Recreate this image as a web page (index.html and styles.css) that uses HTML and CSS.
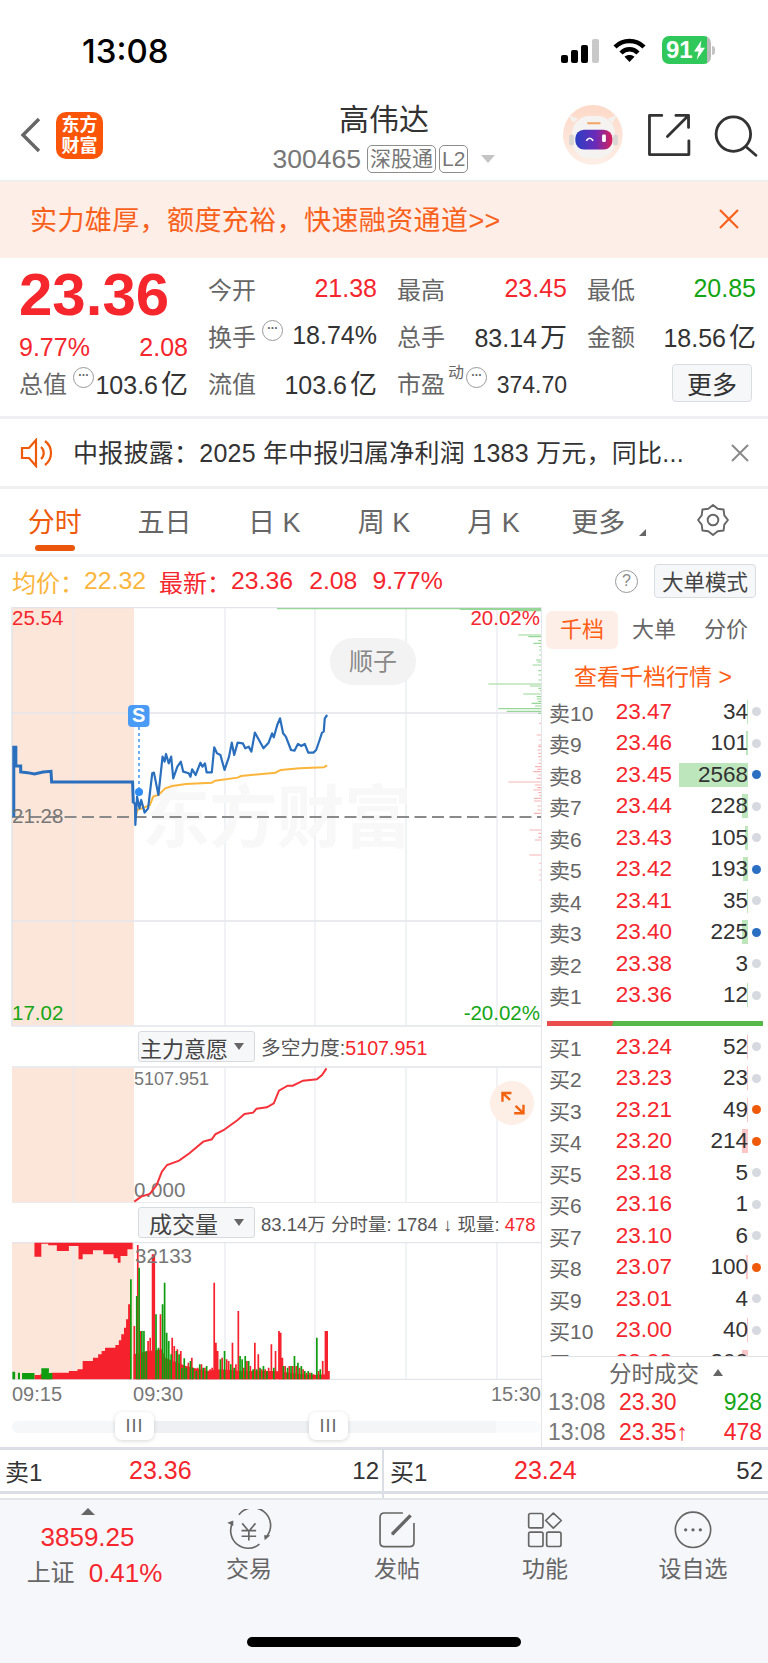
FILE: index.html
```html
<!DOCTYPE html>
<html lang="zh-CN">
<head>
  <meta charset="UTF-8">
  <meta name="viewport" content="width=device-width, initial-scale=1.0">
  <title>高伟达 300465</title>
  <link rel="stylesheet" href="styles.css">
</head>
<body>
  <!-- status bar -->
  <div class="statusbar">
    <span class="clock">13:08</span>
    <div class="status-icons">
      <svg class="signal" width="38" height="24" viewBox="0 0 38 24">
        <rect x="0" y="16" width="7" height="8" rx="2" fill="#000"/>
        <rect x="10" y="11" width="7" height="13" rx="2" fill="#000"/>
        <rect x="20" y="6" width="7" height="18" rx="2" fill="#000"/>
        <rect x="31" y="0" width="7" height="24" rx="2" fill="#c9c9c9"/>
      </svg>
      <svg class="wifi" width="33" height="25" viewBox="0 0 33 25" fill="none" stroke="#000" stroke-width="4.4">
        <path d="M2 9 C10 1 23 1 31 9"/>
        <path d="M8 15 C13 10 20 10 25 15"/>
        <path d="M16.5 24 L11.5 18.8 C14 16.4 19 16.4 21.5 18.8 Z" fill="#000" stroke="none"/>
      </svg>
      <div class="battery">
        <span>91</span>
        <svg width="11" height="22" viewBox="0 0 12 21"><path d="M8 0 L0 12 H5 L3 21 L12 8 H7 Z" fill="#fff"/></svg>
      </div>
      <span class="battery-tip"></span>
    </div>
  </div>

  <!-- nav -->
  <header class="nav">
    <div class="nav-left">
      <svg width="22" height="36" viewBox="0 0 22 36" fill="none" stroke="#666" stroke-width="3.4">
        <path d="M19 2 L3 18 L19 34"/>
      </svg>
      <div class="logo">东方<br>财富</div>
    </div>
    <div class="nav-title">
      <h1>高伟达</h1>
      <div class="nav-sub">
        <span class="code">300465</span>
        <span class="tag">深股通</span>
        <span class="tag">L2</span>
        <span class="caret-down"></span>
      </div>
    </div>
    <div class="nav-right">
      <svg class="robot" width="60" height="60" viewBox="40 20 175 175">
        <defs>
          <linearGradient id="visor" x1="0" x2="1" y1="0" y2="0">
            <stop offset="0" stop-color="#2a3fc4"/>
            <stop offset="0.55" stop-color="#6a2bb8"/>
            <stop offset="1" stop-color="#d8205a"/>
          </linearGradient>
          <linearGradient id="halo" x1="0" x2="0" y1="0" y2="1">
            <stop offset="0" stop-color="#fdd9c8"/>
            <stop offset="1" stop-color="#fdeee6"/>
          </linearGradient>
        </defs>
        <circle cx="127" cy="107" r="87" fill="url(#halo)"/>
        <path d="M70 72 L56 50 L84 60 Z M184 72 L198 50 L170 60 Z" fill="#f4f2f0"/>
        <rect x="66" y="52" width="126" height="124" rx="52" fill="#f5f3f1"/>
        <rect x="58" y="106" width="14" height="32" rx="6" fill="#d9d6d3"/>
        <rect x="186" y="106" width="14" height="32" rx="6" fill="#d9d6d3"/>
        <rect x="110" y="70" width="40" height="6" rx="3" fill="#f4a565"/>
        <rect x="76" y="92" width="108" height="58" rx="25" fill="url(#visor)"/>
        <path d="M108 124 Q118 110 128 124" fill="none" stroke="#fff" stroke-width="5"/>
        <rect x="154" y="106" width="11" height="22" rx="4" fill="#fff"/>
      </svg>
      <svg class="share" width="44" height="44" viewBox="290 45 125 125" fill="none" stroke="#333" stroke-width="8" stroke-linecap="round" stroke-linejoin="round">
        <path d="M332 52 H297 V163 H409 V124"/>
        <path d="M348 112 L407 53 M372 52 H408 V86"/>
      </svg>
      <svg class="search" width="44" height="44" viewBox="495 45 125 125" fill="none" stroke="#333" stroke-width="8" stroke-linecap="round">
        <circle cx="550" cy="105" r="49"/>
        <path d="M586 141 L614 165"/>
      </svg>
    </div>
  </header>

  <!-- promo -->
  <div class="banner">
    <span>实力雄厚，额度充裕，快速融资通道&gt;&gt;</span>
    <svg width="22" height="22" viewBox="0 0 22 22" stroke="#f8611c" stroke-width="2.2"><path d="M2 2 L20 20 M20 2 L2 20"/></svg>
  </div>

  <!-- quote -->
  <section class="quote">
    <div class="price-box">
      <div class="price">23.36</div>
      <div class="price-sub"><span>9.77%</span><span>2.08</span></div>
    </div>
    <div class="cell"><span class="lbl">今开</span><span class="up">21.38</span></div>
    <div class="cell"><span class="lbl">最高</span><span class="up">23.45</span></div>
    <div class="cell"><span class="lbl">最低</span><span class="down">20.85</span></div>
    <div class="cell"><span class="lbl">换手<i class="hint">···</i></span><span class="val">18.74%</span></div>
    <div class="cell"><span class="lbl">总手</span><span class="val">83.14<span class="unit">万</span></span></div>
    <div class="cell"><span class="lbl">金额</span><span class="val">18.56<span class="unit">亿</span></span></div>
    <div class="cell"><span class="lbl">总值<i class="hint">···</i></span><span class="val">103.6<span class="unit">亿</span></span></div>
    <div class="cell"><span class="lbl">流值</span><span class="val">103.6<span class="unit">亿</span></span></div>
    <div class="cell"><span class="lbl">市盈<sup class="dyn">动</sup><i class="hint hint-tight">···</i></span><span class="val val-small">374.70</span></div>
    <div class="cell cell-end"><button class="more-btn">更多</button></div>
  </section>

  <!-- notice -->
  <div class="notice">
    <svg width="34" height="30" viewBox="0 0 34 30" fill="none" stroke="#ee5a0a" stroke-width="2.2">
      <path d="M2 10 H9 L16 2 V28 L9 20 H2 Z"/>
      <path d="M21 9 A8 8 0 0 1 21 21"/>
      <path d="M25 3 A15 15 0 0 1 25 27"/>
    </svg>
    <span class="notice-text">中报披露：2025 年中报归属净利润 1383 万元，同比...</span>
    <svg class="notice-x" width="18" height="18" viewBox="0 0 18 18" stroke="#8a8a8a" stroke-width="2"><path d="M1 1 L17 17 M17 1 L1 17"/></svg>
  </div>

  <!-- period tabs -->
  <nav class="tabs">
    <a class="tab active">分时<span class="tab-bar"></span></a>
    <a class="tab">五日</a>
    <a class="tab">日 K</a>
    <a class="tab">周 K</a>
    <a class="tab">月 K</a>
    <a class="tab tab-more">更多<span class="corner"></span></a>
    <a class="tab">
      <svg width="32" height="32" viewBox="0 0 30 30" fill="none" stroke="#666" stroke-width="1.8" stroke-linejoin="round">
        <polygon points="15,1 19.4,4.4 24.9,5.1 25.6,10.6 29,15 25.6,19.4 24.9,24.9 19.4,25.6 15,29 10.6,25.6 5.1,24.9 4.4,19.4 1,15 4.4,10.6 5.1,5.1 10.6,4.4"/>
        <circle cx="15" cy="15" r="5"/>
      </svg>
    </a>
  </nav>

  <div class="avg-row">
    <span class="avg">均价：</span><span class="avg avg-val">22.32</span>
    <span class="up avg-new">最新：</span><span class="up avg-p">23.36</span><span class="up avg-c">2.08</span><span class="up avg-r">9.77%</span>
    <span class="help">?</span>
    <button class="mode-btn">大单模式</button>
  </div>

  <div class="board">
    <!-- charts -->
    <div class="charts">
      <svg class="chart" width="541" height="420" viewBox="0 607 541 420">
        <rect x="12" y="608" width="122" height="417" fill="#fce5d9"/>
        <path class="grid" d="M73.500 608V1025M225 608V1025M315 608V1025M406 608V1025M497 608V1025"/>
        <path class="frame" d="M12 607.500H541M12 713H541M12 921H541M12 1026H541M12 607V1026"/>
        <text class="wm" x="142" y="842" textLength="270">东方财富</text>
        <g class="depth" transform="translate(460 600) scale(.3333)">
          <path class="depth-g" d="M-549 26H245M0 28H245M150 32H245M175 105H245M205 110H245M235 122H245M220 130H245M238 140H245M238 150H245M238 165H245M228 180H245M232 186H245M218 195H245M235 212H245M235 225H245M235 240H245M85 252H245M210 258H245M235 265H245M240 272H245M190 282H245M230 290H245M230 297H245M235 304H245M215 310H245M225 318H245M115 326H245M140 334H245M235 340H245"/>
          <path class="depth-r" d="M238 370H245M230 405H245M238 420H245M235 435H245M235 440H245M232 450H245M235 460H245M235 470H245M238 480H245M235 490H245M225 500H245M232 508H245M220 515H245M235 525H245M230 535H245M145 546H245M225 555H245M232 563H245M220 570H245M235 578H245M238 587H245M222 595H245M222 603H245M232 618H245M232 630H245M222 640H245M208 690H245M235 700H245M235 712H245M225 720H245M208 765H245M238 790H245M238 810H245M238 825H245M238 840H245"/>
        </g>
        <line class="dash" x1="12" y1="817" x2="541" y2="817"/>
        <rect x="330" y="638" width="86" height="47" rx="23" fill="#f3f3f3"/>
        <text class="shunzi" x="373" y="670">顺子</text>
        <g transform="translate(0 600) scale(.3444 .3333)">
          <polyline class="line-avg" points="395,650 398,630 420,622 435,615 445,590 460,585 480,565 500,558 540,552 615,548 625,542 690,533 700,528 800,518 815,510 870,505 940,502 950,496"/>
          <polyline class="line-pre" points="40,650 40,442 46,442 46,498 60,498 60,516 80,518 100,522 125,516 148,514 150,546 385,546 387,610"/>
          <polyline class="line-price" points="387,610 392,610 393,675 398,590 405,625 410,600 420,638 430,625 442,520 447,518 460,585 472,470 478,485 482,462 490,490 497,470 503,535 515,500 525,485 532,515 548,520 553,530 558,508 568,525 582,488 588,500 595,490 600,517 615,517 622,442 630,460 640,465 652,510 665,470 673,428 680,465 690,428 705,430 712,445 722,440 730,455 740,398 752,420 765,445 780,428 790,400 795,412 805,375 813,355 822,400 830,410 845,450 855,452 865,432 875,438 885,432 895,458 910,458 918,450 928,420 935,398 940,395 943,355 950,345"/>
        </g>
        <line class="s-dash" x1="139" y1="727" x2="139" y2="790"/>
        <circle cx="139" cy="792" r="4" fill="#2f8df5"/>
        <rect x="128" y="705" width="21.500" height="22" rx="4" fill="#4a9bf5"/>
        <text class="s-mark" x="138.700" y="722">S</text>
        <text class="lb red" x="12" y="625">25.54</text>
        <text class="lb gray" x="12" y="823">21.28</text>
        <text class="lb green" x="12" y="1020">17.02</text>
        <text class="lb red end" x="540" y="625">20.02%</text>
        <text class="lb green end" x="540" y="1020">-20.02%</text>
      </svg>

      <div class="ind-row">
        <button class="ind-select">主力意愿<span class="caret-sm"></span></button>
        <span class="ind-info">多空力度:<span class="up">5107.951</span></span>
      </div>

      <svg class="chart" width="541" height="137" viewBox="0 1066 541 137">
        <rect x="12" y="1068" width="122" height="134" fill="#fce5d9"/>
        <path class="grid" d="M73.500 1068V1202M225 1068V1202M315 1068V1202M406 1068V1202M497 1068V1202"/>
        <path class="frame" d="M12 1067H541M12 1203H541"/>
        <text class="lb-s gray" x="134" y="1085">5107.951</text>
        <text class="lb gray" x="134" y="1197">0.000</text>
        <g transform="translate(0 1020) scale(.3444 .3333)">
          <polyline class="line-main" points="390,545 410,530 435,522 455,495 470,455 485,435 520,422 550,400 590,365 615,358 625,343 650,330 690,300 710,282 735,278 745,266 775,262 795,250 810,212 835,197 850,197 880,182 920,178 935,165 948,145"/>
        </g>
        <circle cx="512" cy="1103" r="22" fill="#fdeee6"/>
        <g transform="translate(0 1020) scale(.3444 .3333)">
          <path class="expand" d="M1485 219 H1459 V245 M1459 219 L1481 240 M1493 280 H1520 V254 M1520 280 L1497 258"/>
        </g>
      </svg>

      <div class="ind-row">
        <button class="ind-select ind-select-center">成交量<span class="caret-sm"></span></button>
        <span class="ind-info ind-info-s">83.14万 分时量: 1784 ↓ 现量: <span class="up">478</span></span>
      </div>

      <svg class="chart" width="541" height="138" viewBox="0 1241 541 138">
        <rect x="12" y="1242" width="122" height="136" fill="#fce5d9"/>
        <path class="grid" d="M73.500 1242V1378M225 1242V1378M315 1242V1378M406 1242V1378M497 1242V1378"/>
        <path class="frame" d="M12 1241.500H541M12 1378.500H541"/>
        <g transform="translate(0 1020) scale(.3444 .3333)">
          <polygon fill="#f5222d" points="100,665 100,707 120,707 120,668 140,668 140,673 165,673 165,690 200,690 200,675 228,675 228,715 240,715 240,700 270,700 270,688 300,688 300,700 330,700 330,712 342,712 342,725 350,725 350,705 370,705 370,685 385,685 385,665"/>
          <polygon fill="#f5222d" points="100,1075 100,1062 118,1062 118,1058 150,1058 150,1055 200,1055 200,1050 225,1050 225,1045 240,1045 240,1020 270,1020 270,1010 285,1010 285,1000 295,1000 295,990 305,990 305,980 335,980 335,972 345,972 345,958 352,958 352,940 360,940 360,920 366,920 366,895 372,895 372,850 380,850 380,1075"/>
          <path fill="#0f9d0f" d="M36 1052H44V1075H36ZM52 1055H58V1075H52ZM64 1056H100V1075H64ZM120 1042H142V1075H120ZM142 1056H152V1075H142Z"/>
          <polygon fill="#f5222d" points="388,1075 388,1000 430,990 470,985 480,1010 540,1035 600,1050 640,1045 700,1050 800,1050 900,1062 955,1060 955,1075"/>
          <path class="bars-r" d="M390 1075V915M400 1075V672M408 1075V930M430 1075V960M436 1075V950M443 1075V700M448 1075V700M466 1075V880M500 1075V950M506 1075V975M515 1075V985M525 1075V990M547 1075V1025M557 1075V1010M574 1075V1040M585 1075V1030M595 1075V1040M605 1075V1050M610 1075V1045M616 1075V1040M622 1075V785M627 1075V965M632 1075V990M645 1075V1010M658 1075V1015M664 1075V1020M675 1075V965M685 1075V1030M692 1075V870M708 1075V1040M717 1075V1020M727 1075V1035M740 1075V965M750 1075V1000M760 1075V1045M770 1075V1045M780 1075V1040M788 1075V970M800 1075V990M810 1075V930M815 1075V935M820 1075V1010M828 1075V1035M840 1075V1035M850 1075V1035M860 1075V1035M870 1075V1040M880 1075V1045M890 1075V1055M900 1075V1055M910 1075V1060M925 1075V1050M937 1075V1020M945 1075V930M950 1075V930M955 1075V1050"/>
          <path class="bars-g" d="M380 1075V775M397 1075V825M404 1075V740M412 1075V930M418 1075V930M425 1075V990M453 1075V880M460 1075V980M472 1075V850M478 1075V785M484 1075V935M490 1075V960M497 1075V1000M512 1075V990M520 1075V1000M528 1075V1040M535 1075V1012M541 1075V1040M553 1075V1020M560 1075V1040M570 1075V1050M580 1075V1030M590 1075V1040M600 1075V1035M640 1075V1015M652 1075V990M670 1075V1030M680 1075V1040M697 1075V1005M703 1075V1015M712 1075V1005M722 1075V1020M735 1075V1045M745 1075V1045M755 1075V1040M765 1075V1035M775 1075V1050M795 1075V1040M823 1075V1035M835 1075V1040M845 1075V1035M855 1075V1005M865 1075V1025M875 1075V1035M885 1075V1050M895 1075V1050M905 1075V1055M920 1075V950M930 1075V1045"/>
        </g>
        <text class="lb gray" x="135" y="1262">32133</text>
      </svg>

      <div class="time-axis"><span>09:15</span><span class="time-mid">09:30</span><span class="time-end">15:30</span></div>

      <div class="slider">
        <div class="track">
          <div class="track-sel"></div>
          <div class="handle handle-a">III</div>
          <div class="handle handle-b">III</div>
        </div>
      </div>
    </div>

    <!-- order book -->
    <aside class="book">
      <div class="book-tabs">
        <span class="book-tab on">千档</span>
        <span class="book-tab">大单</span>
        <span class="book-tab">分价</span>
      </div>
      <div class="book-link">查看千档行情 &gt;</div>
      <div class="book-list">
        <div class="row"><span class="r-l">卖10</span><span class="r-p">23.47</span><span class="r-v">34<i class="vb vb-g" style="width:1px"></i></span><span class="dot"></span></div>
        <div class="row"><span class="r-l">卖9</span><span class="r-p">23.46</span><span class="r-v">101<i class="vb vb-g" style="width:2px"></i></span><span class="dot"></span></div>
        <div class="row"><span class="r-l">卖8</span><span class="r-p">23.45</span><span class="r-v">2568<i class="vb vb-g" style="width:69px"></i></span><span class="dot dot-b"></span></div>
        <div class="row"><span class="r-l">卖7</span><span class="r-p">23.44</span><span class="r-v">228<i class="vb vb-g" style="width:6px"></i></span><span class="dot"></span></div>
        <div class="row"><span class="r-l">卖6</span><span class="r-p">23.43</span><span class="r-v">105<i class="vb vb-g" style="width:3px"></i></span><span class="dot"></span></div>
        <div class="row"><span class="r-l">卖5</span><span class="r-p">23.42</span><span class="r-v">193<i class="vb vb-g" style="width:5px"></i></span><span class="dot dot-b"></span></div>
        <div class="row"><span class="r-l">卖4</span><span class="r-p">23.41</span><span class="r-v">35<i class="vb vb-g" style="width:1px"></i></span><span class="dot"></span></div>
        <div class="row"><span class="r-l">卖3</span><span class="r-p">23.40</span><span class="r-v">225<i class="vb vb-g" style="width:6px"></i></span><span class="dot dot-b"></span></div>
        <div class="row"><span class="r-l">卖2</span><span class="r-p">23.38</span><span class="r-v">3</span><span class="dot"></span></div>
        <div class="row"><span class="r-l">卖1</span><span class="r-p">23.36</span><span class="r-v">12<i class="vb vb-g" style="width:1px"></i></span><span class="dot"></span></div>
        <div class="split"></div>
        <div class="row"><span class="r-l">买1</span><span class="r-p">23.24</span><span class="r-v">52<i class="vb vb-r" style="width:1px"></i></span><span class="dot"></span></div>
        <div class="row"><span class="r-l">买2</span><span class="r-p">23.23</span><span class="r-v">23<i class="vb vb-r" style="width:1px"></i></span><span class="dot"></span></div>
        <div class="row"><span class="r-l">买3</span><span class="r-p">23.21</span><span class="r-v">49<i class="vb vb-r" style="width:1px"></i></span><span class="dot dot-o"></span></div>
        <div class="row"><span class="r-l">买4</span><span class="r-p">23.20</span><span class="r-v">214<i class="vb vb-r" style="width:6px"></i></span><span class="dot dot-o"></span></div>
        <div class="row"><span class="r-l">买5</span><span class="r-p">23.18</span><span class="r-v">5</span><span class="dot"></span></div>
        <div class="row"><span class="r-l">买6</span><span class="r-p">23.16</span><span class="r-v">1</span><span class="dot"></span></div>
        <div class="row"><span class="r-l">买7</span><span class="r-p">23.10</span><span class="r-v">6</span><span class="dot"></span></div>
        <div class="row"><span class="r-l">买8</span><span class="r-p">23.07</span><span class="r-v">100<i class="vb vb-r" style="width:2px"></i></span><span class="dot dot-o"></span></div>
        <div class="row"><span class="r-l">买9</span><span class="r-p">23.01</span><span class="r-v">4</span><span class="dot"></span></div>
        <div class="row"><span class="r-l">买10</span><span class="r-p">23.00</span><span class="r-v">40<i class="vb vb-r" style="width:1px"></i></span><span class="dot"></span></div>
        <div class="row"><span class="r-l">买11</span><span class="r-p">22.98</span><span class="r-v">300<i class="vb vb-r" style="width:6px"></i></span><span class="dot"></span></div>
      </div>
      <div class="trades">
        <div class="trades-head">分时成交<span class="caret-up"></span></div>
        <div class="trade"><span class="t-time">13:08</span><span class="up">23.30</span><span class="down">928</span></div>
        <div class="trade"><span class="t-time">13:08</span><span class="up">23.35↑</span><span class="up">478</span></div>
      </div>
    </aside>
  </div>

  <!-- best bid / ask -->
  <div class="best">
    <div class="best-cell"><span>卖1</span><span class="up">23.36</span><span class="best-v">12</span></div>
    <div class="best-cell"><span>买1</span><span class="up">23.24</span><span class="best-v">52</span></div>
  </div>
  <div class="best-gap"><span></span></div>

  <!-- bottom bar -->
  <footer class="tabbar">
    <div class="index">
      <span class="caret-up caret-index"></span>
      <div class="index-price up">3859.25</div>
      <div class="index-line"><span class="index-name">上证</span><span class="up">0.41%</span></div>
    </div>
    <div class="tb-item">
      <svg width="48" height="42" viewBox="20 25 145 126" fill="none" stroke="#666" stroke-width="5">
        <path d="M62 42 A53 53 0 0 1 147 106"/>
        <path d="M124 131 A53 53 0 0 1 43 66"/>
        <path d="M27 66 L45 59 L45 76 Z M157 104 L140 119 L138 104 Z" fill="#666" stroke="none"/>
        <path d="M72 68 L92 92 L112 68 M70 90 H114 M70 107 H114 M92 92 V120"/>
      </svg>
      <span>交易</span>
    </div>
    <div class="tb-item">
      <svg width="42" height="42" viewBox="475 28 125 125" fill="none" stroke="#666" stroke-width="5">
        <path d="M555 40 H500 Q487 40 487 53 V127 Q487 140 500 140 H575 Q588 140 588 127 V70"/>
        <path d="M523 103 L578 47" stroke-width="10"/>
        <path d="M520 106 L527 97 L531 102 Z" fill="#666" stroke="none"/>
      </svg>
      <span>发帖</span>
    </div>
    <div class="tb-item">
      <svg width="40" height="42" viewBox="920 28 120 125" fill="none" stroke="#666" stroke-width="5">
        <rect x="931" y="41" width="43" height="43" rx="5"/>
        <rect x="931" y="97" width="43" height="43" rx="5"/>
        <rect x="985" y="97" width="43" height="43" rx="5"/>
        <path d="M1005 40 L1029 62 L1005 85 L982 62 Z" stroke-linejoin="round"/>
      </svg>
      <span>功能</span>
    </div>
    <div class="tb-item">
      <svg width="40" height="42" viewBox="1362 28 120 125" fill="none" stroke="#666" stroke-width="5">
        <circle cx="1422" cy="90" r="53"/>
        <circle cx="1400" cy="90" r="5" fill="#666" stroke="none"/>
        <circle cx="1422" cy="90" r="5" fill="#666" stroke="none"/>
        <circle cx="1444" cy="90" r="5" fill="#666" stroke="none"/>
      </svg>
      <span>设自选</span>
    </div>
    <div class="home-bar"></div>
  </footer>
</body>
</html>
```

FILE: styles.css
```css
* {
  box-sizing: border-box;
}
body {
  margin: 0;
  width: 768px;
  height: 1663px;
  overflow: hidden;
  background-color: #fff;
  color: #333;
  font-family: "Liberation Sans", "Noto Sans CJK SC", sans-serif;
}
.up {
  color: #f5262c;
}
.down {
  color: #14a514;
}

/* status bar */
.statusbar {
  height: 88px;
  display: flex;
  justify-content: space-between;
  padding: 32px 53px 0 82px;
}
.clock {
  font-family: Inter, sans-serif;
  font-size: 33px;
  font-weight: 500;
  line-height: 38px;
  color: #000;
}
.status-icons {
  display: flex;
  align-items: flex-start;
  height: 32px;
  margin-top: 5px;
}
.signal {
  margin: 2px 14px 0 0;
}
.wifi {
  margin: 1px 16px 0 0;
}
.battery {
  width: 49px;
  height: 28px;
  border-radius: 7px;
  display: flex;
  align-items: center;
  padding-left: 4px;
  gap: 1px;
  background: linear-gradient(90deg, #30c85a 91%, #b9b9b9 91%);
  color: #fff;
  font-size: 24px;
  font-weight: 700;
  margin: -1px 1px 0 0;
}
.battery-tip {
  width: 3px;
  height: 9px;
  margin-top: 9px;
  border-radius: 0 3px 3px 0;
  background-color: #c4c4c4;
}

/* nav */
.nav {
  height: 92px;
  display: grid;
  grid-template-columns: 1fr auto 1fr;
  align-items: center;
  padding: 0 20px;
}
.nav-left {
  display: flex;
  align-items: center;
  gap: 14px;
  margin-top: 2px;
}
.logo {
  width: 47px;
  height: 47px;
  border-radius: 10px;
  background-color: #fb5509;
  color: #fff;
  font-size: 18px;
  font-weight: 700;
  line-height: 21px;
  text-align: center;
  padding-top: 3px;
}
.nav-title {
  text-align: center;
  margin-top: 7px;
}
.nav-title h1 {
  margin: 0;
  font-size: 30px;
  font-weight: 400;
  line-height: 40px;
  color: #333;
}
.nav-sub {
  display: flex;
  align-items: center;
  gap: 3px;
  height: 32px;
  margin-top: 3px;
}
.code {
  font-size: 26.500px;
  color: #777;
  margin-right: 3px;
}
.tag {
  border: 1px solid #8d8d8d;
  border-radius: 5px;
  height: 28px;
  line-height: 26px;
  padding: 0 2px;
  font-size: 21px;
  color: #777;
}
.caret-down {
  width: 0;
  height: 0;
  margin-left: 10px;
  border-left: 7px solid transparent;
  border-right: 7px solid transparent;
  border-top: 8px solid #c4c4c4;
}
.nav-right {
  display: flex;
  justify-content: flex-end;
  align-items: center;
  gap: 20px;
  margin-top: 2px;
  margin-right: -10px;
}
.robot {
  margin-right: 4px;
}
.search {
  margin-left: 3px;
}

/* banner */
.banner {
  height: 78px;
  display: flex;
  align-items: center;
  justify-content: space-between;
  padding: 0 28px 4px 30px;
  background-color: #fdeee7;
  color: #f8611c;
  font-size: 27px;
  letter-spacing: 0.4px;
  border-top: 2px solid #f1efee;
}
.banner svg {
  margin-top: 2px;
}

/* quote grid */
.quote {
  height: 161px;
  display: grid;
  grid-template-columns: 169px 169px 170px 169px;
  grid-template-rows: repeat(3, 47px);
  column-gap: 20px;
  padding: 7px 0 0 19px;
  border-bottom: 3px solid #f0f0f2;
  font-size: 25px;
}
.price-box {
  grid-row: span 2;
}
.price {
  font-size: 60px;
  font-weight: 700;
  line-height: 60px;
  color: #f5262c;
  margin-top: 0;
}
.price-sub {
  display: flex;
  justify-content: space-between;
  color: #f5262c;
  font-size: 25px;
  line-height: 30px;
  margin-top: 7px;
}
.cell {
  display: flex;
  justify-content: space-between;
  align-items: center;
}
.cell-end {
  justify-content: flex-end;
  padding-right: 4px;
}
.lbl {
  display: flex;
  align-items: center;
  color: #666;
  font-size: 24px;
}
.val {
  color: #333;
  white-space: nowrap;
}
.unit {
  font-size: 27px;
  margin-left: 3px;
}
.val-small {
  font-size: 23px;
  padding-top: 5px;
}
.hint {
  width: 21px;
  height: 21px;
  margin: -10px 0 0 6px;
  border: 1.5px solid #999;
  border-radius: 50%;
  color: #666;
  font-family: "Liberation Sans", sans-serif;
  font-size: 12px;
  font-style: normal;
  font-weight: 700;
  letter-spacing: -0.5px;
  line-height: 15px;
  text-align: center;
}
.hint-tight {
  margin-left: 2px;
}
.dyn {
  font-size: 16px;
  margin: -20px 0 0 3px;
  line-height: 20px;
}
.more-btn {
  width: 80px;
  height: 38px;
  padding: 0;
  background-color: #f6f7f9;
  border: 1px solid #d9dce1;
  border-radius: 4px;
  font: inherit;
  color: #333;
}

/* notice */
.notice {
  height: 70px;
  display: flex;
  align-items: center;
  padding: 0 19px 0 20px;
  border-bottom: 3px solid #f0f0f2;
}
.notice-text {
  flex: 1;
  margin: -3px 0 0 19px;
  font-size: 25px;
  letter-spacing: 0.25px;
  white-space: nowrap;
  color: #333;
}

/* tabs */
.tabs {
  height: 68px;
  display: grid;
  grid-template-columns: repeat(7, 109.700px);
  border-bottom: 3px solid #eff0f3;
}
.tab {
  position: relative;
  display: flex;
  align-items: center;
  justify-content: center;
  font-size: 27px;
  color: #666;
  padding-bottom: 3px;
}
.tab.active {
  color: #ee5a0a;
}
.tab-more {
  padding-right: 10px;
}
.tab-bar {
  position: absolute;
  left: 35px;
  top: 56px;
  width: 40px;
  height: 6px;
  border-radius: 3px;
  background-color: #e9560c;
}
.corner {
  position: absolute;
  left: 91px;
  top: 40px;
  width: 0;
  height: 0;
  border-left: 7px solid transparent;
  border-bottom: 7px solid #666;
}

/* average row */
.avg-row {
  height: 50px;
  display: flex;
  align-items: center;
  padding: 0 12px 2px;
  font-size: 24px;
  white-space: nowrap;
}
.avg {
  color: #fcb53b;
}
.avg-val,
.avg-p,
.avg-c,
.avg-r {
  font-size: 24.800px;
}
.avg-new {
  margin-left: 13px;
}
.avg-c {
  margin-left: 16px;
}
.avg-r {
  margin-left: 15px;
}
.help {
  width: 23px;
  height: 23px;
  margin-left: auto;
  border: 1.5px solid #999;
  border-radius: 50%;
  color: #888;
  font-size: 16px;
  line-height: 20px;
  text-align: center;
}
.mode-btn {
  width: 102px;
  height: 34px;
  margin: -1px 0 0 16px;
  padding: 0;
  background-color: #f6f7f9;
  border: 1px solid #d9dce1;
  border-radius: 4px;
  font-family: inherit;
  font-size: 21.500px;
  color: #444;
}

/* board */
.board {
  display: flex;
  height: 840px;
}
.charts {
  width: 541px;
  flex: none;
}
.chart {
  display: block;
}
.grid {
  fill: none;
  stroke: #e7eaf1;
  stroke-width: 1.2;
}
.frame {
  fill: none;
  stroke: #e3e5ea;
  stroke-width: 1.6;
}
.wm {
  font-size: 68px;
  font-weight: 700;
  fill: #f8f8f8;
}
.depth path {
  fill: none;
  stroke-width: 3.4;
}
.depth-g {
  stroke: #96d696;
}
.depth-r {
  stroke: #f8b4b4;
}
.dash {
  stroke: #8a8a8a;
  stroke-width: 2.2;
  stroke-dasharray: 12 5.500;
}
.shunzi {
  font-size: 24px;
  fill: #888;
  text-anchor: middle;
}
.line-price,
.line-pre,
.line-avg,
.line-main,
.bars-r,
.bars-g,
.expand {
  fill: none;
  vector-effect: non-scaling-stroke;
}
.line-price {
  stroke: #2a6fbd;
  stroke-width: 2.2;
  stroke-linejoin: round;
}
.line-pre {
  stroke: #2a6fbd;
  stroke-width: 3;
}
.line-avg {
  stroke: #fcb53b;
  stroke-width: 2;
}
.line-main {
  stroke: #f5323a;
  stroke-width: 2;
}
.expand {
  stroke: #f3620f;
  stroke-width: 2.4;
}
.bars-r {
  stroke: #f5222d;
  stroke-width: 1.7;
}
.bars-g {
  stroke: #0f9d0f;
  stroke-width: 1.7;
}
.s-dash {
  stroke: #4a9bf5;
  stroke-width: 1.6;
  stroke-dasharray: 3 3;
}
.s-mark {
  font-size: 20px;
  font-weight: 700;
  fill: #fff;
  text-anchor: middle;
}
.lb {
  font-size: 20.500px;
}
.lb-s {
  font-size: 18px;
}
.end {
  text-anchor: end;
}
.red {
  fill: #f5262c;
}
.green {
  fill: #14a514;
}
.gray {
  fill: #777;
}
.ind-row {
  height: 39px;
  display: flex;
  align-items: center;
  padding-left: 138px;
  white-space: nowrap;
}
.ind-select {
  width: 117px;
  height: 31px;
  display: flex;
  align-items: center;
  justify-content: space-between;
  padding: 0 10px 0 1px;
  background-color: #f6f7f9;
  border: 1px solid #d7dae0;
  border-radius: 3px;
  font-family: inherit;
  font-size: 22px;
  color: #444;
}
.ind-select-center {
  padding-left: 10px;
  font-size: 23px;
}
.caret-sm {
  width: 0;
  height: 0;
  border-left: 5px solid transparent;
  border-right: 5px solid transparent;
  border-top: 7px solid #666;
}
.ind-info {
  margin-left: 6px;
  font-size: 19.700px;
  color: #555;
}
.ind-info-s {
  font-size: 18.500px;
}
.time-axis {
  height: 29px;
  display: flex;
  align-items: center;
  padding: 0 0 0 12px;
  font-size: 20px;
  color: #777;
}
.time-mid {
  margin-left: 71px;
}
.time-end {
  margin-left: auto;
}
.slider {
  padding: 12px 0 0 12px;
}
.track {
  position: relative;
  width: 529px;
  height: 12px;
  border-radius: 6px;
  background: linear-gradient(90deg, #f6f7f9 455px, #f9fafb 485px);
}
.track-sel {
  margin-left: 115px;
  width: 369px;
  height: 12px;
  background: linear-gradient(90deg, #eff0f3 217px, #f4f5f7 217px);
}
.handle {
  position: absolute;
  top: -9px;
  width: 39px;
  height: 28px;
  border-radius: 7px;
  background-color: #fff;
  box-shadow: 0 1px 4px rgba(0, 0, 0, 0.16);
  color: #666;
  font-size: 18px;
  line-height: 28px;
  text-align: center;
  letter-spacing: 1px;
}
.handle-a {
  left: 103px;
}
.handle-b {
  left: 297px;
}

/* order book */
.book {
  flex: 1;
  border-left: 1px solid #e3e5ea;
  display: flex;
  flex-direction: column;
}
.book-tabs {
  display: grid;
  grid-template-columns: repeat(3, 72px);
  padding: 4px 0 0 4px;
}
.book-tab {
  height: 38px;
  line-height: 38px;
  text-align: center;
  border-radius: 6px;
  font-size: 22px;
  color: #666;
}
.book-tab.on {
  background-color: #fdeee7;
  color: #ff5e14;
}
.book-link {
  height: 36px;
  margin-top: 10px;
  line-height: 36px;
  padding-left: 32px;
  font-size: 23px;
  color: #ff5e14;
}
.book-list {
  height: 661px;
  overflow: hidden;
  margin-top: 1px;
}
.row {
  height: 31.500px;
  display: grid;
  grid-template-columns: 63px 60px 76px 16px;
  align-items: center;
  padding-left: 7px;
  font-size: 22.500px;
}
.r-l {
  font-size: 21px;
  color: #666;
}
.r-p {
  color: #f5262c;
  text-align: right;
}
.r-v {
  position: relative;
  height: 24px;
  line-height: 24px;
  color: #333;
  text-align: right;
}
.vb {
  position: absolute;
  right: 0;
  top: 0;
  height: 24px;
  z-index: -1;
}
.vb-g {
  background-color: #bde6bd;
}
.vb-r {
  background-color: #fcc6c6;
}
.dot {
  width: 9px;
  height: 9px;
  justify-self: center;
  border-radius: 50%;
  background-color: #d6d9df;
}
.dot-b {
  background-color: #2b6fc2;
}
.dot-o {
  background-color: #ee5a0a;
}
.split {
  height: 5px;
  margin: 10px 5px 5px 5px;
  background: linear-gradient(105deg, #ea4d4d 30%, #55b848 31%);
}
.trades {
  border-top: 1px solid #dfe1e6;
  font-size: 23px;
}
.trades-head {
  height: 30px;
  display: flex;
  align-items: center;
  justify-content: center;
  gap: 14px;
  padding-left: 22px;
  font-size: 22.500px;
  color: #666;
}
.caret-up {
  display: block;
  width: 0;
  height: 0;
  border-left: 5.500px solid transparent;
  border-right: 5.500px solid transparent;
  border-bottom: 7px solid #666;
}
.trade {
  height: 30px;
  display: grid;
  grid-template-columns: 71px 1fr auto;
  align-items: center;
  padding: 0 6px 0 6px;
}
.t-time {
  color: #777;
}

/* best bid ask */
.best {
  height: 47px;
  display: grid;
  grid-template-columns: 384px 1fr;
  border-top: 3px solid #dcdee6;
  border-bottom: 3px solid #dcdee6;
  font-size: 24px;
}
.best-cell {
  display: grid;
  grid-template-columns: 124px 1fr auto;
  align-items: center;
  padding: 0 3px 0 5px;
  white-space: nowrap;
}
.best-cell .up {
  font-size: 25px;
}
.best-cell:first-child {
  border-right: 2px solid #dcdee6;
}
.best-cell:last-child {
  padding: 0 5px 0 6px;
}
.best-v {
  color: #333;
}
.best-gap {
  height: 4px;
  padding-left: 382px;
}
.best-gap span {
  display: block;
  width: 2px;
  height: 4px;
  background-color: #dcdee6;
}

/* bottom bar */
.tabbar {
  position: relative;
  height: 165px;
  display: grid;
  grid-template-columns: 175px repeat(4, 148px);
  background-color: #f6f7fb;
  border-top: 2px solid #e3e5ea;
}
.index {
  display: flex;
  flex-direction: column;
  align-items: center;
  padding-top: 8px;
}
.index-price {
  margin-top: 7px;
  font-size: 26px;
  line-height: 30px;
}
.caret-index {
  border-left-width: 7px;
  border-right-width: 7px;
  border-bottom-width: 7px;
}
.index-line {
  display: flex;
  gap: 14px;
  margin: 6px 0 0 14px;
  font-size: 26px;
  line-height: 30px;
}
.index-name {
  font-size: 24px;
  color: #666;
}
.tb-item {
  display: flex;
  flex-direction: column;
  align-items: center;
  padding-top: 9px;
  font-size: 23px;
  color: #666;
}
.tb-item span {
  margin-top: 3px;
  line-height: 30px;
}
.home-bar {
  position: absolute;
  left: 247px;
  top: 137px;
  width: 274px;
  height: 10px;
  border-radius: 5px;
  background-color: #000;
}
```
